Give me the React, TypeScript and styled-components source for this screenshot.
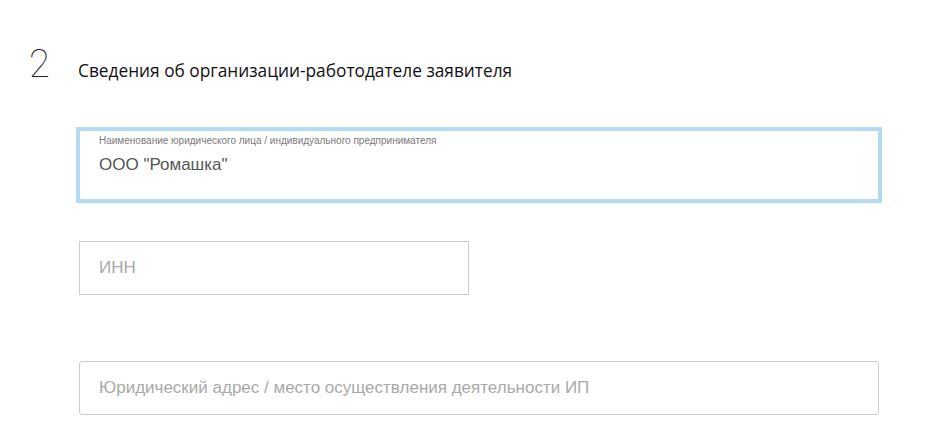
import { FC } from "react";
import styled, { createGlobalStyle } from "styled-components";

const GlobalStyle = createGlobalStyle`
  html, body {
    margin: 0;
    padding: 0;
    background: #ffffff;
  }
`;

const App: FC = () => {
  return (
    <>
      <GlobalStyle />
      <Section>
        <SectionHeader>
          <StepNumber>2</StepNumber>
          <Heading>Сведения об организации-работодателе заявителя</Heading>
        </SectionHeader>

        <Fields>
          <Field $focused>
            <FloatingLabel>
              Наименование юридического лица / индивидуального предпринимателя
            </FloatingLabel>
            <Value>ООО "Ромашка"</Value>
          </Field>

          <Field $width="390px" $offset="41px">
            <Placeholder>ИНН</Placeholder>
          </Field>

          <Field $rounded $offset="66px">
            <Placeholder>
              Юридический адрес / место осуществления деятельности ИП
            </Placeholder>
          </Field>
        </Fields>
      </Section>
    </>
  );
};

const Section = styled.section`
  display: flex;
  flex-direction: column;

  width: 948px;
  height: 448px;
  padding: 42px 0 0 29px;
  box-sizing: border-box;
  overflow: hidden;
`;

const SectionHeader = styled.div`
  display: flex;
  align-items: flex-start;
  gap: 21px;
  height: 44px;
`;

const StepNumber = styled.span`
  width: 28px;

  font-family: "Roboto", sans-serif;
  font-weight: 100;
  font-size: 38px;
  line-height: 44px;

  color: #222222;
`;

const Heading = styled.h2`
  margin: 17px 0 0;

  font-family: "Open Sans", sans-serif;
  font-weight: 400;
  font-size: 17.3px;
  line-height: 24px;
  white-space: nowrap;

  color: #111111;
`;

const Fields = styled.div`
  display: flex;
  flex-direction: column;

  width: 800px;
  margin: 44px 0 0 50px;
`;

type FieldProps = {
  $focused?: boolean;
  $width?: string;
  $rounded?: boolean;
  $offset?: string;
};

const Field = styled.div<FieldProps>`
  display: flex;
  flex-direction: column;
  justify-content: ${({ $focused }) => ($focused ? "flex-start" : "center")};

  width: ${({ $width }) => $width ?? "100%"};
  height: ${({ $focused }) => ($focused ? "70px" : "54px")};
  margin-top: ${({ $offset }) => $offset ?? "0"};
  padding: ${({ $focused }) => ($focused ? "3px 19px 0" : "0 19px")};
  box-sizing: border-box;

  background: #ffffff;
  border: 1px solid ${({ $focused }) => ($focused ? "#b3dcf4" : "#cccccc")};
  border-radius: ${({ $rounded }) => ($rounded ? "3px" : "0")};
  box-shadow: ${({ $focused }) => ($focused ? "0 0 0 3px #b3dcf4" : "none")};
`;

const FloatingLabel = styled.span`
  font-family: "Liberation Sans", Arial, sans-serif;
  font-size: 10px;
  line-height: 14px;

  color: #7a7a7a;
`;

const Value = styled.span`
  margin-top: 6px;

  font-family: "Liberation Sans", Arial, sans-serif;
  font-size: 17px;
  line-height: 22px;

  color: #555555;
`;

const Placeholder = styled.span`
  font-family: "Liberation Sans", Arial, sans-serif;
  font-size: 17px;
  line-height: 22px;

  color: #a9a9a9;
`;

export default App;
